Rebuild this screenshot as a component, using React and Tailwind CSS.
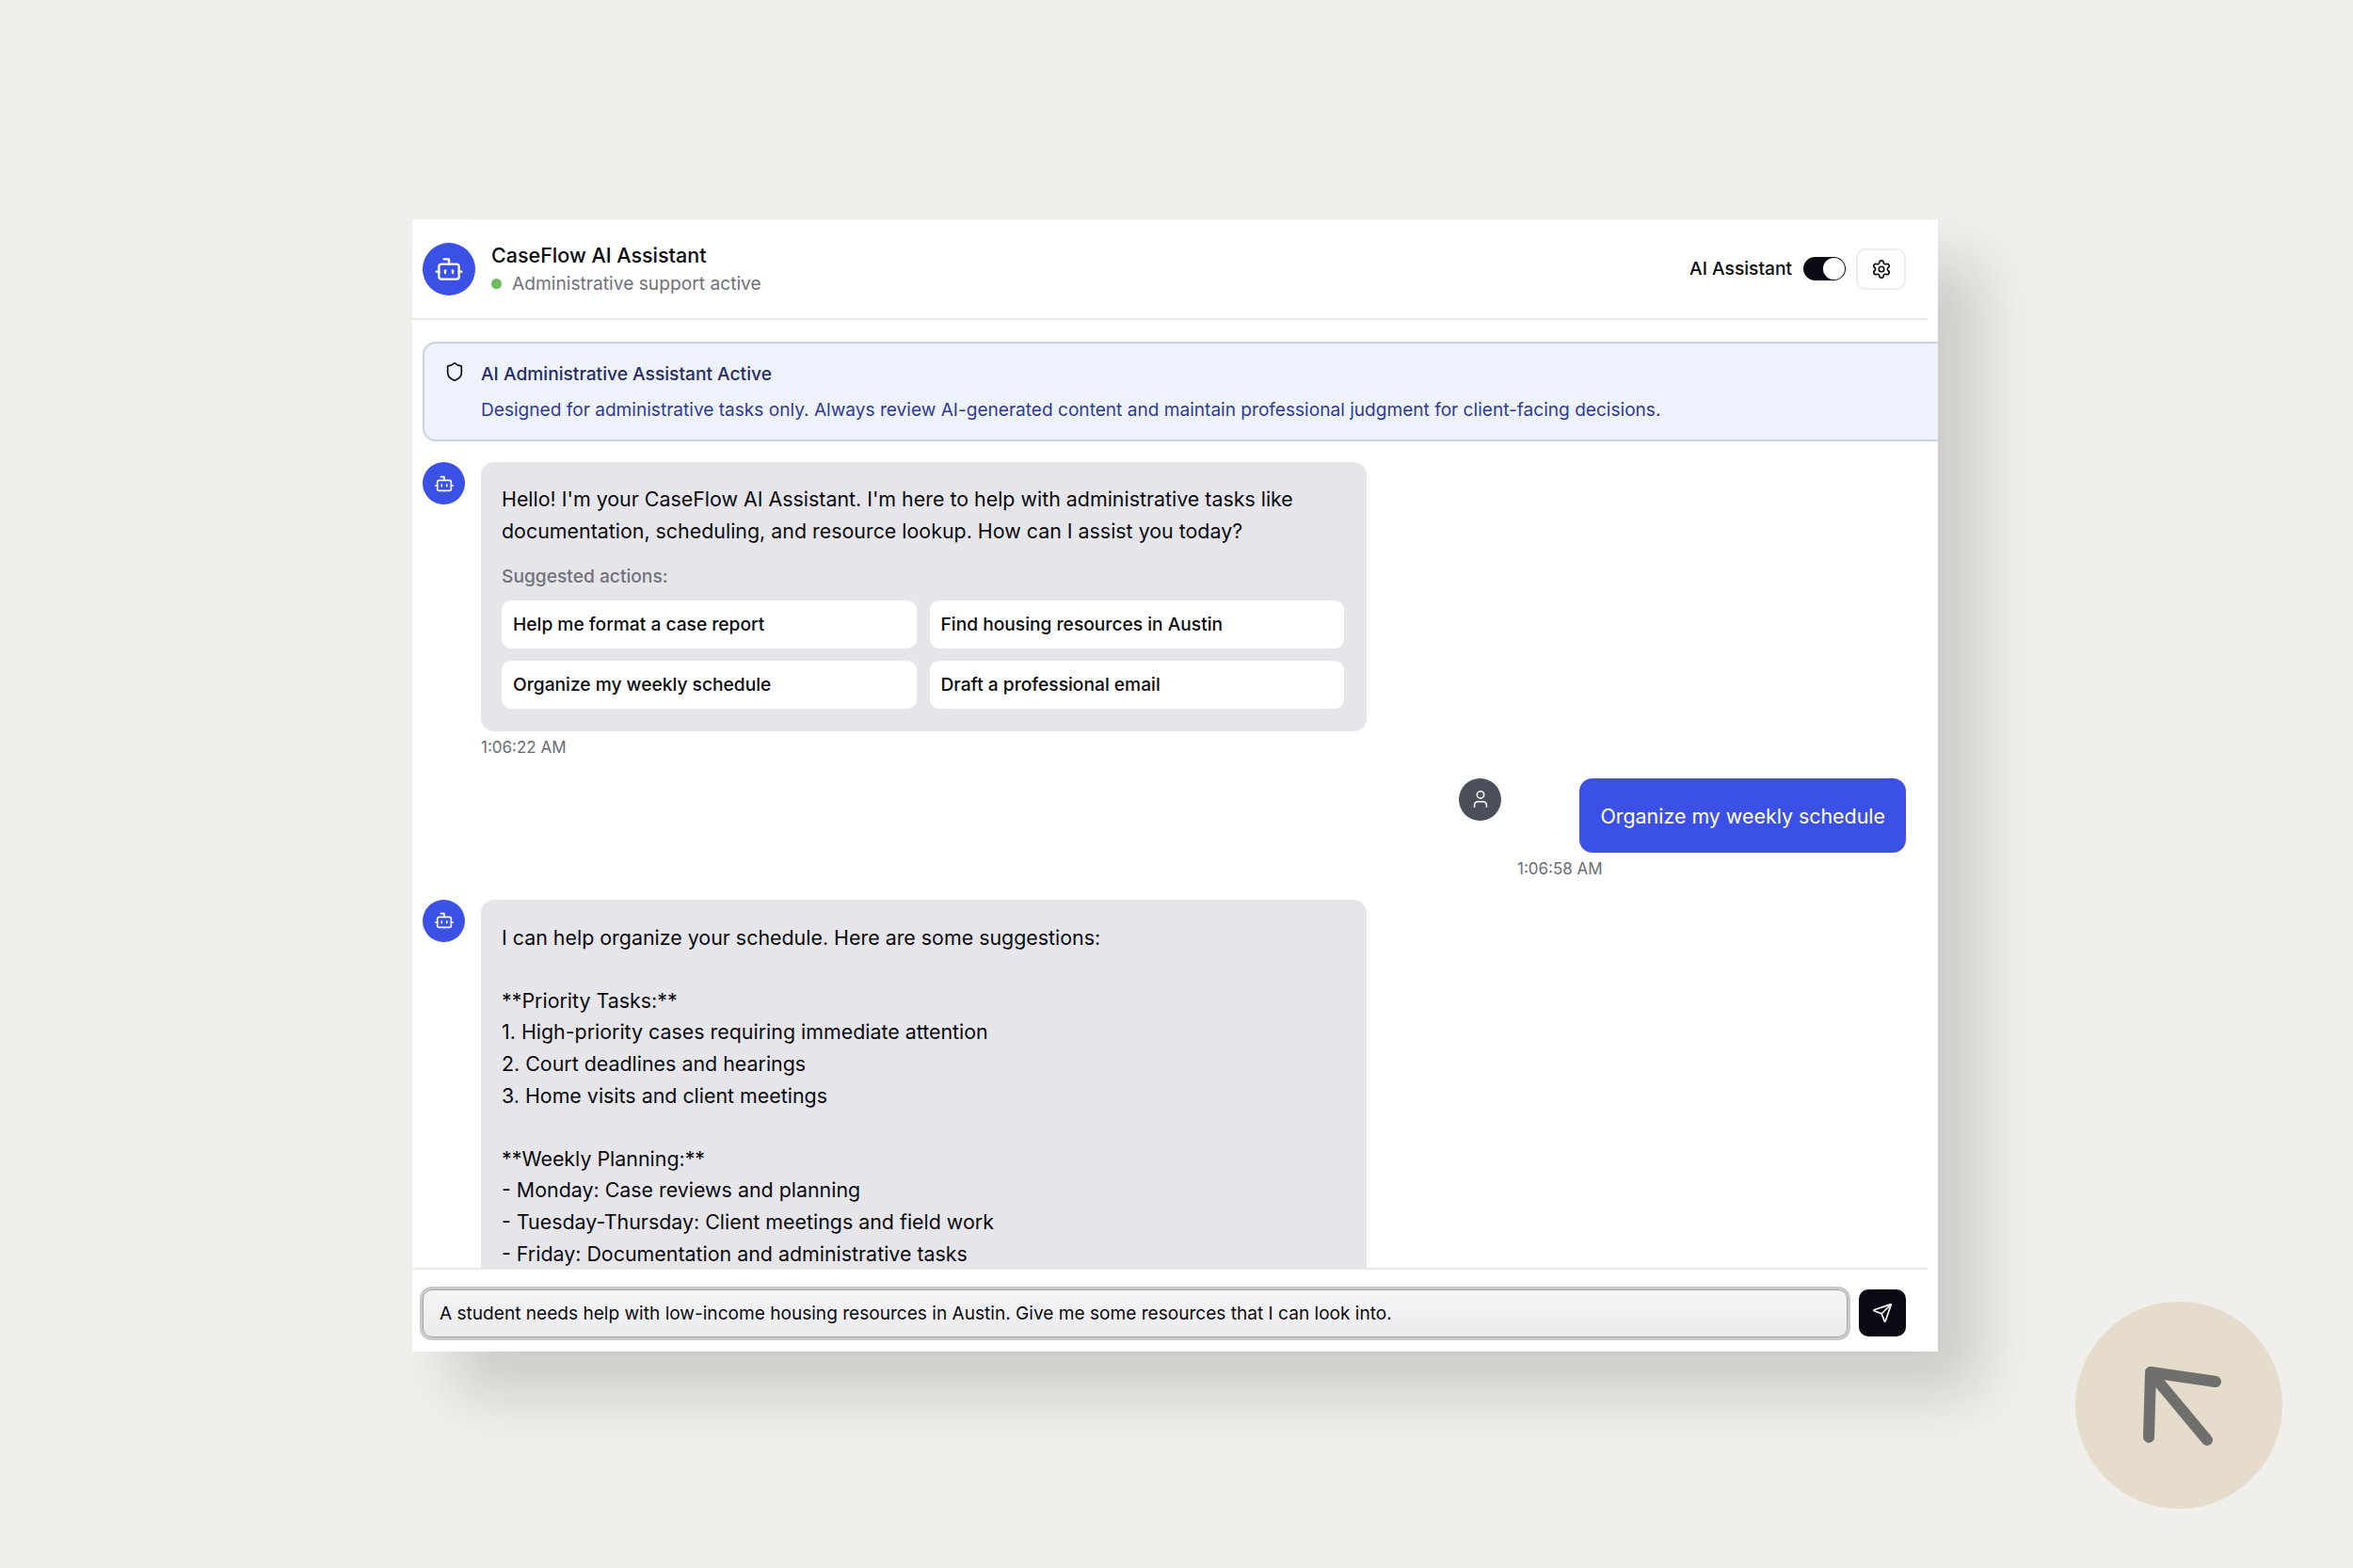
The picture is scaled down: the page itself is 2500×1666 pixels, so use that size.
import React from 'react';
import { Bot, Send, Settings, Shield, User } from 'lucide-react';

const suggestions = [
  'Help me format a case report',
  'Find housing resources in Austin',
  'Organize my weekly schedule',
  'Draft a professional email',
];

const reply = `I can help organize your schedule. Here are some suggestions:

**Priority Tasks:**
1. High-priority cases requiring immediate attention
2. Court deadlines and hearings
3. Home visits and client meetings

**Weekly Planning:**
- Monday: Case reviews and planning
- Tuesday-Thursday: Client meetings and field work
- Friday: Documentation and administrative tasks`;

const BotAvatar = () => (
  <div className="flex h-[45px] w-[45px] shrink-0 items-center justify-center rounded-full bg-[#3a50e6] text-white">
    <Bot size={22} strokeWidth={1.8} />
  </div>
);

const App = () => {
  return (
    <div className="relative h-[1666px] overflow-hidden bg-[#f0efeb] pl-[438px] pt-[233px] font-['Inter',sans-serif] text-[#0a0a0f]">
      <div className="flex h-[1203px] w-[1621px] flex-col overflow-hidden bg-white shadow-[45px_45px_60px_rgba(0,0,0,0.15)]">
        {/* header */}
        <div className="mr-[11px] flex h-[107px] shrink-0 items-center justify-between border-b-2 border-[#e8e8ea] pl-[11px] pr-[23px]">
          <div className="flex items-center gap-[17px]">
            <div className="flex h-[56px] w-[56px] items-center justify-center rounded-full bg-[#3a50e6] text-white">
              <Bot size={32} strokeWidth={1.8} />
            </div>
            <div>
              <div className="text-[21.5px] font-medium leading-[30px]">CaseFlow AI Assistant</div>
              <div className="mt-[1px] flex items-center gap-[11px] text-[19.2px] leading-[28px] text-[#71717a]">
                <span className="h-[11px] w-[11px] rounded-full bg-[#6dbb5c]" />
                Administrative support active
              </div>
            </div>
          </div>
          <div className="flex items-center gap-[11px]">
            <span className="mr-[1px] text-[19.2px] font-medium">AI Assistant</span>
            <div className="flex h-[25px] w-[45px] items-center justify-end rounded-full bg-[#0a0a14] pr-[1px]">
              <span className="h-[23px] w-[23px] rounded-full bg-white" />
            </div>
            <div className="flex h-[44px] w-[53px] items-center justify-center rounded-[10px] border-2 border-[#ececee] bg-white">
              <Settings size={22} strokeWidth={1.8} />
            </div>
          </div>
        </div>

        {/* messages */}
        <div className="min-h-0 flex-1 overflow-hidden pl-[11px] pr-[34px] pt-[23px]">
          <div className="flex h-[106px] w-[1640px] gap-[17px] rounded-[14px] border-2 border-[#c9d3e6] bg-[#eef2fc] pl-[21px] pt-[18px]">
            <Shield size={22} strokeWidth={1.8} className="mt-[1px] shrink-0" />
            <div>
              <div className="text-[19.2px] font-medium leading-[28px] text-[#262c66]">AI Administrative Assistant Active</div>
              <div className="mt-[11px] text-[19.08px] leading-[28px] text-[#2f3a96]">
                Designed for administrative tasks only. Always review AI-generated content and maintain professional judgment for client-facing decisions.
              </div>
            </div>
          </div>

          <div className="mt-[22px] flex gap-[17px]">
            <BotAvatar />
            <div className="w-[941px]">
              <div className="rounded-[14px] bg-[#e6e6ea] px-[22px] pb-[24px] pt-[23px] pr-[24px]">
                <p className="text-[21.4px] leading-[33.6px]">
                  Hello! I'm your CaseFlow AI Assistant. I'm here to help with administrative tasks like documentation, scheduling, and resource lookup. How can I assist you today?
                </p>
                <div className="mt-[16.5px] text-[19.2px] font-medium leading-[28px] text-[#71717a]">Suggested actions:</div>
                <div className="mt-[12px] grid grid-cols-2 gap-x-[14px] gap-y-[13px]">
                  {suggestions.map(label => (
                    <div key={label} className="flex h-[51px] items-center rounded-[10px] bg-white px-[12px] text-[19.2px] font-medium">
                      {label}
                    </div>
                  ))}
                </div>
              </div>
              <div className="mt-[3px] text-[17px] leading-[28px] text-[#6b6b73]">1:06:22 AM</div>
            </div>
          </div>

          <div className="mt-[19px] flex justify-end gap-[17px]">
            <div className="flex h-[45px] w-[45px] shrink-0 items-center justify-center rounded-full bg-[#4b4f59] text-white">
              <User size={22} strokeWidth={1.8} />
            </div>
            <div className="w-[413px]">
              <div className="ml-auto flex h-[79px] w-fit items-center rounded-[14px] bg-[#3a50e6] px-[22px] pt-[1px] text-[21.4px] text-white">
                Organize my weekly schedule
              </div>
              <div className="mt-[3px] text-[17px] leading-[28px] text-[#6b6b73]">1:06:58 AM</div>
            </div>
          </div>

          <div className="mt-[19px] flex gap-[17px]">
            <BotAvatar />
            <div className="w-[941px] whitespace-pre-line rounded-[14px] bg-[#e6e6ea] px-[22px] pb-[60px] pt-[24px] text-[21.4px] leading-[33.6px]">
              {reply}
            </div>
          </div>
        </div>

        {/* composer */}
        <div className="mr-[11px] flex h-[89px] shrink-0 gap-[12px] border-t-2 border-[#e8e8ea] pl-[11px] pr-[23px] pt-[21px]">
          <div className="flex h-[51px] flex-1 items-center rounded-[10px] border border-[#a5a5a8] bg-gradient-to-b from-[#f5f5f7] to-[#ebebee] px-[17px] pt-[2px] text-[19.08px] ring-[3px] ring-[#c8c8ca]">
            A student needs help with low-income housing resources in Austin. Give me some resources that I can look into.
          </div>
          <div className="flex h-[50px] w-[50px] shrink-0 items-center justify-center rounded-[10px] bg-[#0a0a14] text-white">
            <Send size={22} strokeWidth={1.8} />
          </div>
        </div>
      </div>

      {/* floating badge */}
      <div className="absolute left-[2205px] top-[1383px] h-[220px] w-[220px] rounded-full bg-[#e6dccb]">
        <svg viewBox="0 0 220 220" className="h-full w-full" fill="none" stroke="#6f6f6d" strokeWidth="12" strokeLinecap="round" strokeLinejoin="round">
          <path d="M78 144 L80 75 L149 85" />
          <path d="M80 75 L140 147" />
        </svg>
      </div>
    </div>
  );
};

export default App;
